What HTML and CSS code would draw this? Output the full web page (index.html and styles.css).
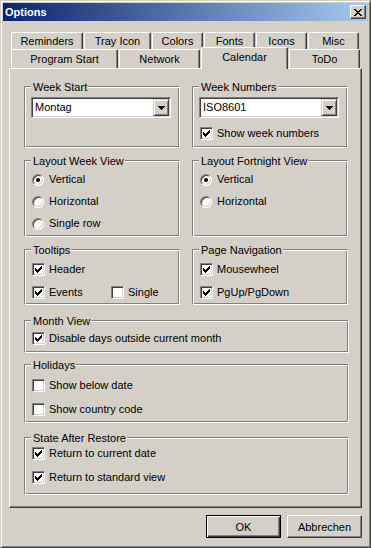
FILE: index.html
```html
<!DOCTYPE html>
<html lang="en">
<head>
    <meta charset="UTF-8">
    <meta name="viewport" content="width=device-width, initial-scale=1.0">
    <title>Options</title>
    <link rel="stylesheet" href="styles.css">
</head>
<body>
    <div class="window">
        <div class="titlebar">
            <span class="title">Options</span>
            <span class="close">
                <svg width="8" height="7" viewBox="0 0 8 7" shape-rendering="crispEdges"><path d="M0 0h2v1H0zM6 0h2v1H6zM1 1h2v1H1zM5 1h2v1H5zM2 2h4v1H2zM3 3h2v1H3zM2 4h4v1H2zM1 5h2v1H1zM5 5h2v1H5zM0 6h2v1H0zM6 6h2v1H6z" fill="#000"/></svg>
            </span>
        </div>

        <div class="content">
            <div class="tabs">
                <div class="tab-row back">
                    <div class="tab w-reminders">Reminders</div>
                    <div class="tab w-tray">Tray Icon</div>
                    <div class="tab w-small">Colors</div>
                    <div class="tab w-small">Fonts</div>
                    <div class="tab w-small">Icons</div>
                    <div class="tab w-small">Misc</div>
                </div>
                <div class="tab-row front">
                    <div class="tab w-program">Program Start</div>
                    <div class="tab w-network">Network</div>
                    <div class="tab w-calendar selected">Calendar</div>
                    <div class="tab w-todo">ToDo</div>
                </div>
            </div>

            <div class="panel">
                <div class="pair">
                    <div class="group g-start">
                        <span class="legend">Week Start</span>
                        <div class="combo">
                            <span class="combo-text">Montag</span>
                            <span class="combo-btn"><svg width="7" height="4" viewBox="0 0 7 4" shape-rendering="crispEdges"><path d="M0 0h7v1H0zM1 1h5v1H1zM2 2h3v1H2zM3 3h1v1H3z" fill="#000"/></svg></span>
                        </div>
                    </div>
                    <div class="group g-start g-numbers">
                        <span class="legend">Week Numbers</span>
                        <div class="combo">
                            <span class="combo-text">ISO8601</span>
                            <span class="combo-btn"><svg width="7" height="4" viewBox="0 0 7 4" shape-rendering="crispEdges"><path d="M0 0h7v1H0zM1 1h5v1H1zM2 2h3v1H2zM3 3h1v1H3z" fill="#000"/></svg></span>
                        </div>
                        <div class="opt"><span class="check"><svg class="tick" viewBox="0 0 7 7"><path d="M0 2h1v3H0zM1 3h1v3H1zM2 4h1v3H2zM3 3h1v3H3zM4 2h1v3H4zM5 1h1v3H5zM6 0h1v3H6z"/></svg></span>Show week numbers</div>
                    </div>
                </div>

                <div class="pair sp-12">
                    <div class="group g-layout">
                        <span class="legend">Layout Week View</span>
                        <div class="opt"><span class="radio on"></span>Vertical</div>
                        <div class="opt"><span class="radio"></span>Horizontal</div>
                        <div class="opt"><span class="radio"></span>Single row</div>
                    </div>
                    <div class="group g-layout">
                        <span class="legend">Layout Fortnight View</span>
                        <div class="opt"><span class="radio on"></span>Vertical</div>
                        <div class="opt"><span class="radio"></span>Horizontal</div>
                    </div>
                </div>

                <div class="pair sp-12">
                    <div class="group g-tips">
                        <span class="legend">Tooltips</span>
                        <div class="opt"><span class="check"><svg class="tick" viewBox="0 0 7 7"><path d="M0 2h1v3H0zM1 3h1v3H1zM2 4h1v3H2zM3 3h1v3H3zM4 2h1v3H4zM5 1h1v3H5zM6 0h1v3H6z"/></svg></span>Header</div>
                        <div class="opt-line">
                            <div class="opt wide"><span class="check"><svg class="tick" viewBox="0 0 7 7"><path d="M0 2h1v3H0zM1 3h1v3H1zM2 4h1v3H2zM3 3h1v3H3zM4 2h1v3H4zM5 1h1v3H5zM6 0h1v3H6z"/></svg></span>Events</div>
                            <div class="opt"><span class="check"></span>Single</div>
                        </div>
                    </div>
                    <div class="group g-tips">
                        <span class="legend">Page Navigation</span>
                        <div class="opt"><span class="check"><svg class="tick" viewBox="0 0 7 7"><path d="M0 2h1v3H0zM1 3h1v3H1zM2 4h1v3H2zM3 3h1v3H3zM4 2h1v3H4zM5 1h1v3H5zM6 0h1v3H6z"/></svg></span>Mousewheel</div>
                        <div class="opt"><span class="check"><svg class="tick" viewBox="0 0 7 7"><path d="M0 2h1v3H0zM1 3h1v3H1zM2 4h1v3H2zM3 3h1v3H3zM4 2h1v3H4zM5 1h1v3H5zM6 0h1v3H6z"/></svg></span>PgUp/PgDown</div>
                    </div>
                </div>

                <div class="group g-month sp-15">
                    <span class="legend">Month View</span>
                    <div class="opt"><span class="check"><svg class="tick" viewBox="0 0 7 7"><path d="M0 2h1v3H0zM1 3h1v3H1zM2 4h1v3H2zM3 3h1v3H3zM4 2h1v3H4zM5 1h1v3H5zM6 0h1v3H6z"/></svg></span>Disable days outside current month</div>
                </div>

                <div class="group g-holidays sp-11">
                    <span class="legend">Holidays</span>
                    <div class="opt"><span class="check"></span>Show below date</div>
                    <div class="opt"><span class="check"></span>Show country code</div>
                </div>

                <div class="group g-state sp-14">
                    <span class="legend">State After Restore</span>
                    <div class="opt"><span class="check"><svg class="tick" viewBox="0 0 7 7"><path d="M0 2h1v3H0zM1 3h1v3H1zM2 4h1v3H2zM3 3h1v3H3zM4 2h1v3H4zM5 1h1v3H5zM6 0h1v3H6z"/></svg></span>Return to current date</div>
                    <div class="opt"><span class="check"><svg class="tick" viewBox="0 0 7 7"><path d="M0 2h1v3H0zM1 3h1v3H1zM2 4h1v3H2zM3 3h1v3H3zM4 2h1v3H4zM5 1h1v3H5zM6 0h1v3H6z"/></svg></span>Return to standard view</div>
                </div>
            </div>

            <div class="buttons">
                <div class="btn default">OK</div>
                <div class="btn">Abbrechen</div>
            </div>
        </div>
    </div>
</body>
</html>
```

FILE: styles.css
```css
body {
    margin: 0;
    background: #d4d0c8;
    font-family: "Liberation Sans", Arial, sans-serif;
    font-size: 11px;
    color: #000;
}

.window {
    width: 371px;
    height: 548px;
    box-sizing: border-box;
    background: #d4d0c8;
    border: 1px solid;
    border-color: #d4d0c8 #404040 #404040 #d4d0c8;
    box-shadow: inset 1px 1px #fff, inset -1px -1px #808080;
    padding: 2px;
}

/* title bar */
.titlebar {
    height: 18px;
    display: flex;
    align-items: center;
    justify-content: space-between;
    padding: 0 2px;
    background: linear-gradient(to right, #0a246a, #a6caf0);
}

.title {
    color: #fff;
    font-weight: bold;
    line-height: 18px;
}

.close {
    width: 16px;
    height: 14px;
    box-sizing: border-box;
    display: flex;
    align-items: center;
    justify-content: center;
    background: #d4d0c8;
    border: 1px solid;
    border-color: #fff #404040 #404040 #fff;
    box-shadow: inset -1px -1px #808080;
}

.content {
    padding: 11px 6px 7px;
}

/* tabs */
.tabs {
    padding-left: 2px;
}

.tab-row {
    display: flex;
    align-items: flex-start;
}

.tab-row.back {
    height: 17px;
}

.tab-row.front {
    height: 19px;
}

.tab {
    box-sizing: border-box;
    margin-right: 1px;
    border-top: 1px solid #fff;
    border-left: 1px solid #fff;
    border-right: 1px solid #404040;
    border-radius: 2px 2px 0 0;
    box-shadow: inset -1px 0 #808080;
    background: #d4d0c8;
    text-align: center;
    line-height: 16px;
}

.back .tab {
    height: 17px;
}

.front .tab {
    height: 19px;
    line-height: 18px;
}

.front .tab.selected {
    position: relative;
    z-index: 1;
    height: 22px;
    margin-top: -2px;
    line-height: 19px;
}

.w-reminders { width: 72px; }
.w-tray { width: 67px; }
.w-small { width: 51px; }
.w-program { width: 107px; }
.w-network { width: 81px; }
.w-calendar { width: 87px; }
.w-todo { width: 71px; }

/* page */
.panel {
    border: 1px solid;
    border-color: #fff #404040 #404040 #fff;
    box-shadow: inset -1px -1px #808080;
    padding: 17px 12px 12px 14px;
}

.pair {
    display: grid;
    grid-template-columns: 156px 156px;
    column-gap: 12px;
}

.sp-11 { margin-top: 11px; }
.sp-12 { margin-top: 12px; }
.sp-14 { margin-top: 14px; }
.sp-15 { margin-top: 15px; }

.group {
    position: relative;
    box-sizing: border-box;
    border: 1px solid;
    border-color: #808080 #fff #fff #808080;
    box-shadow: inset 1px 1px #fff, inset -1px -1px #808080;
    display: flex;
    flex-direction: column;
    padding-left: 7px;
}

.legend {
    position: absolute;
    top: -6px;
    left: 6px;
    padding: 0 1px 0 2px;
    line-height: 13px;
    background: #d4d0c8;
}

.g-start { height: 62px; padding-top: 10px; padding-left: 6px; }
.g-numbers { row-gap: 9px; }
.g-numbers .opt { margin-left: 1px; }
.g-layout { height: 77px; padding-top: 12px; row-gap: 9px; }
.g-tips { height: 56px; padding-top: 13px; row-gap: 10px; }
.g-month { height: 33px; padding-top: 11px; }
.g-holidays { height: 59px; padding-top: 14px; row-gap: 11px; }
.g-state { height: 58px; padding-top: 9px; row-gap: 11px; }

/* controls */
.combo {
    width: 140px;
    height: 21px;
    box-sizing: border-box;
    display: flex;
    padding: 1px;
    background: #fff;
    border: 1px solid;
    border-color: #808080 #fff #fff #808080;
    box-shadow: inset 1px 1px #404040, inset -1px -1px #d4d0c8;
}

.combo-text {
    flex: 1;
    padding-left: 2px;
    line-height: 17px;
}

.combo-btn {
    width: 16px;
    height: 17px;
    box-sizing: border-box;
    display: flex;
    align-items: center;
    justify-content: center;
    background: #d4d0c8;
    border: 1px solid;
    border-color: #d4d0c8 #404040 #404040 #d4d0c8;
    box-shadow: inset 1px 1px #fff, inset -1px -1px #808080;
}

.opt-line {
    display: flex;
}

.opt {
    display: flex;
    align-items: center;
    height: 13px;
    line-height: 13px;
    white-space: nowrap;
}

.opt.wide {
    width: 79px;
}

.check {
    display: flex;
    width: 13px;
    height: 13px;
    box-sizing: border-box;
    padding: 2px;
    margin-right: 4px;
    flex-shrink: 0;
    background: #fff;
    border: 1px solid;
    border-color: #808080 #fff #fff #808080;
    box-shadow: inset 1px 1px #404040, inset -1px -1px #d4d0c8;
}

.tick {
    width: 7px;
    height: 7px;
    fill: #000;
    shape-rendering: crispEdges;
}

.radio {
    position: relative;
    width: 12px;
    height: 12px;
    box-sizing: border-box;
    margin-right: 5px;
    flex-shrink: 0;
    border-radius: 50%;
    background: #fff;
    border: 1px solid;
    border-color: #808080 #fff #fff #808080;
    box-shadow: inset 1px 1px #404040, inset -1px -1px #d4d0c8;
}

.radio.on::after {
    content: "";
    position: absolute;
    left: 3px;
    top: 3px;
    width: 4px;
    height: 4px;
    border-radius: 50%;
    background: #000;
}

/* dialog buttons */
.buttons {
    display: flex;
    justify-content: flex-end;
    gap: 6px;
    margin-top: 7px;
}

.btn {
    width: 75px;
    height: 23px;
    box-sizing: border-box;
    display: flex;
    align-items: center;
    justify-content: center;
    background: #d4d0c8;
    border: 1px solid;
    border-color: #fff #404040 #404040 #fff;
    box-shadow: inset -1px -1px #808080;
}

.btn.default {
    border-color: #000;
    box-shadow: inset 1px 1px #fff, inset -1px -1px #404040, inset -2px -2px #808080;
}
```
